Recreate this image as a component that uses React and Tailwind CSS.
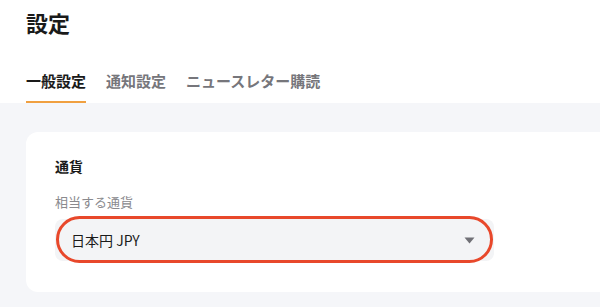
import React from "react";

const tabs = ["一般設定", "通知設定", "ニュースレター購読"];

const App = () => {
  return (
    <div
      className="w-[600px] h-[307px] overflow-hidden bg-white flex flex-col"
      style={{ fontFamily: '"Noto Sans CJK JP", "Noto Sans", sans-serif' }}
    >
      {/* Header */}
      <div className="px-[26px] pt-[6px]">
        <h1 className="text-[22px] leading-[33px] font-bold text-[#1a1a1a]">設定</h1>
        <div className="flex gap-5 mt-[31px]">
          {tabs.map((tab, i) => (
            <div
              key={tab}
              className={
                i === 0
                  ? "text-[15px] leading-[22px] font-semibold text-[#1a1a1a] pb-[9px] border-b-2 border-[#f0a040]"
                  : "text-[15px] leading-[22px] font-semibold text-[#76767b] pb-[9px] border-b-2 border-transparent"
              }
            >
              {tab}
            </div>
          ))}
        </div>
      </div>

      {/* Content */}
      <div className="flex-1 bg-[#f5f6f9] pl-[26px] pt-[29px]">
        <div className="w-[700px] bg-white rounded-xl pl-[29px] pt-[24px] pb-[31px]">
          <h2 className="text-[14px] leading-[20px] font-bold text-[#1a1a1a]">通貨</h2>
          <p className="mt-[17px] text-[13px] leading-[18px] text-[#8a8a8e]">相当する通貨</p>
          <div className="relative mt-2 w-[439px] h-[42px] rounded-lg bg-[#f3f4f6] flex items-center justify-between pl-4 pr-[19px]">
            <span className="text-[14px] text-[#1a1a1a]">日本円 JPY</span>
            <svg width="11" height="7" viewBox="0 0 11 7">
              <path d="M0.5 0.5h10L5.5 6.5z" fill="#707076" />
            </svg>
            <div className="absolute top-[-3px] bottom-[-2px] left-px right-px rounded-full border-[3px] border-[#e8482b] pointer-events-none" />
          </div>
        </div>
      </div>
    </div>
  );
};

export default App;
